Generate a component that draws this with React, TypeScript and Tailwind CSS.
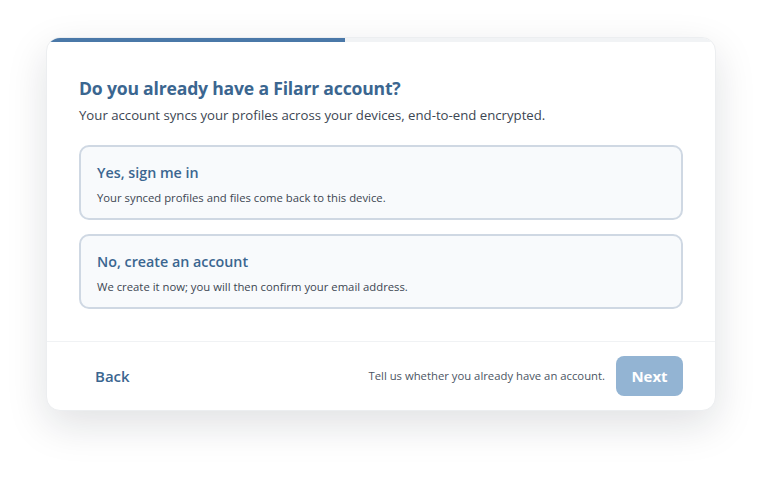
import React from 'react';

const options = [
  { title: 'Yes, sign me in', desc: 'Your synced profiles and files come back to this device.' },
  { title: 'No, create an account', desc: 'We create it now; you will then confirm your email address.' },
];

export default function App() {
  return (
    <div
      className="w-[762px] h-[482px] bg-white pt-[37px] pl-[46px]"
      style={{ fontFamily: '"Open Sans", "Noto Sans", sans-serif' }}
    >
      <div className="w-[670px] h-[374px] bg-white rounded-[14px] overflow-hidden border border-[#eceef0] shadow-[0_14px_40px_rgba(15,23,42,0.13)] flex flex-col">
        {/* Progress */}
        <div className="h-1 bg-[#f1f3f5] shrink-0">
          <div className="h-1 w-[298px] bg-[#4a78a8]" />
        </div>

        {/* Body */}
        <div className="px-8 pt-[34px] flex-1">
          <h1 className="text-[17.6px] leading-[25px] font-bold text-[#3b6690] tracking-[-0.2px]">
            Do you already have a Filarr account?
          </h1>
          <p className="mt-[4px] text-[13.2px] leading-[20px] text-[#3c4652]">
            Your account syncs your profiles across your devices, end-to-end encrypted.
          </p>

          <div className="mt-[20px] flex flex-col gap-[14px]">
            {options.map(o => (
              <div
                key={o.title}
                className="h-[75px] w-full rounded-[10px] border-2 border-[#cfd8e3] bg-[#f8fafc] px-4 pt-[16px] cursor-pointer"
              >
                <div className="text-[14.3px] leading-[20px] font-semibold text-[#3b6690]">{o.title}</div>
                <div className="mt-[7px] text-[11.3px] leading-[16px] text-[#3c4652]">{o.desc}</div>
              </div>
            ))}
          </div>
        </div>

        {/* Footer */}
        <div className="h-[69px] border-t border-[#f0f2f4] px-8 flex items-center justify-between shrink-0">
          <button className="px-4 h-10 text-[15px] font-semibold text-[#3b6690]">Back</button>
          <div className="flex items-center gap-[11px]">
            <span className="text-[11.3px] text-[#4b5563]">Tell us whether you already have an account.</span>
            <button className="h-10 w-[67px] rounded-[8px] bg-[#93b4d3] text-white text-[15px] font-bold">Next</button>
          </div>
        </div>
      </div>
    </div>
  );
}
